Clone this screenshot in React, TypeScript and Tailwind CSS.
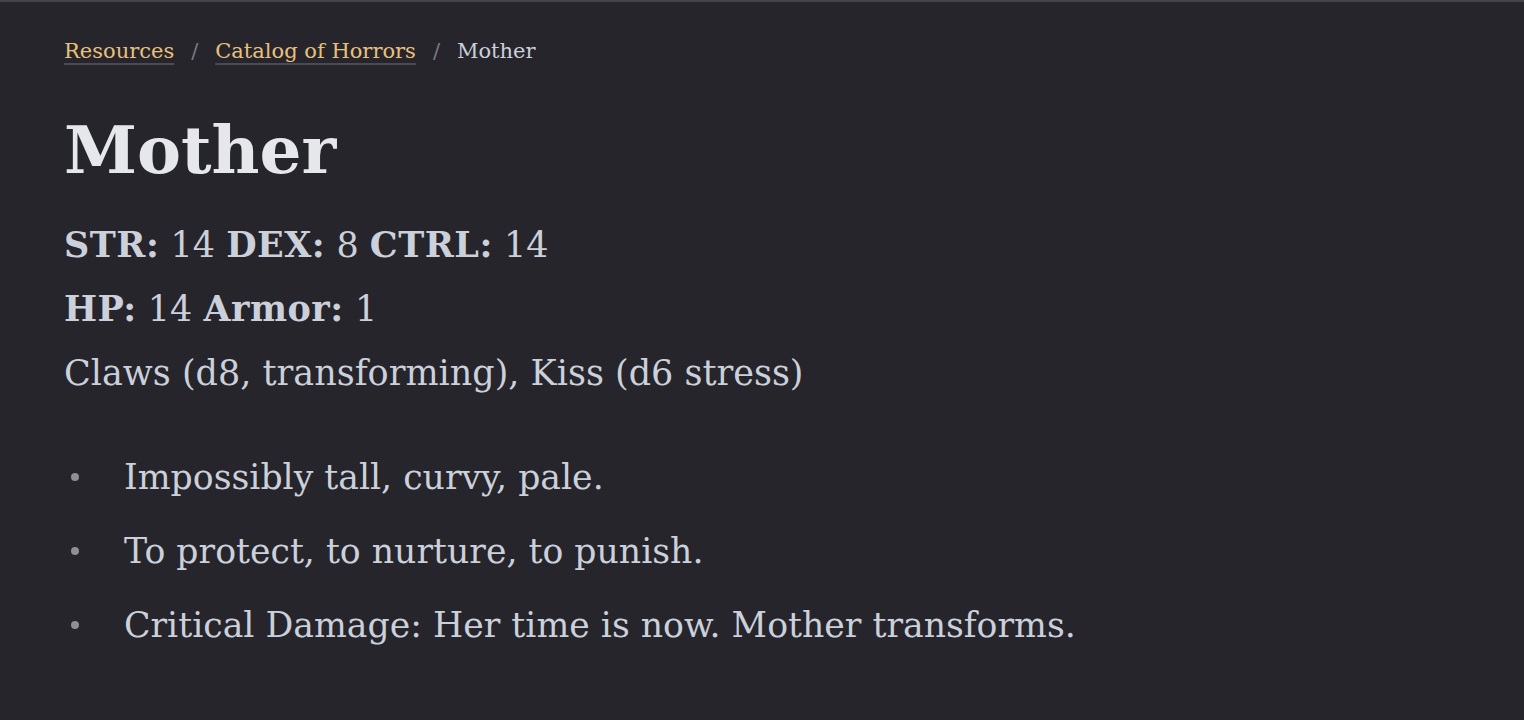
const stats = [
  [
    ["STR:", "14"],
    ["DEX:", "8"],
    ["CTRL:", "14"],
  ],
  [
    ["HP:", "14"],
    ["Armor:", "1"],
  ],
];

const notes = [
  "Impossibly tall, curvy, pale.",
  "To protect, to nurture, to punish.",
  "Critical Damage: Her time is now. Mother transforms.",
];

export default function App() {
  return (
    <div className="min-h-screen border-t-2 border-[#45434d] bg-[#26252c] font-['DejaVu_Serif',serif] text-[#cbd0da]">
      <div className="px-16 pt-[33px]">
        <nav className="flex items-center text-[21px] leading-[32px]">
          <a className="text-[#e8c07e] underline decoration-[#4b4a56] decoration-2 underline-offset-[5px]">Resources</a>
          <span className="px-[17px] text-[#7d7c86]">/</span>
          <a className="text-[#e8c07e] underline decoration-[#4b4a56] decoration-2 underline-offset-[5px]">Catalog of Horrors</a>
          <span className="px-[17px] text-[#7d7c86]">/</span>
          <span className="text-[#cbd0da]">Mother</span>
        </nav>

        <h1 className="mt-[43px] text-[66px] font-bold leading-[80px] text-[#e5e7eb]">Mother</h1>

        <div className="mt-[23px] text-[35px] leading-[64px]">
          {stats.map((row, i) => (
            <p key={i}>
              {row.map(([k, v], j) => (
                <span key={j}>
                  {j > 0 && " "}
                  <b className="font-bold tracking-[0.5px]">{k}</b> {v}
                </span>
              ))}
            </p>
          ))}
          <p>Claws (d8, transforming), Kiss (d6 stress)</p>
        </div>

        <ul className="mt-[35px] text-[34.7px] leading-[74px]">
          {notes.map((n) => (
            <li key={n} className="flex items-center">
              <span className="ml-[7px] mr-[45px] size-[8px] shrink-0 rounded-full bg-[#8f8e97]" />
              {n}
            </li>
          ))}
        </ul>
      </div>
    </div>
  );
}
